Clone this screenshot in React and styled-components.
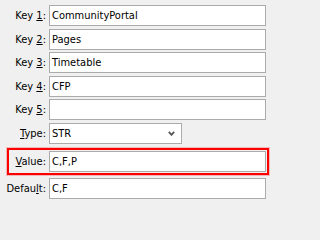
import React from "react";
import styled, { createGlobalStyle } from "styled-components";

const Global = createGlobalStyle`
  html, body { margin: 0; padding: 0; background: #f0f0f0; }
  body { font-family: "DejaVu Sans Condensed", "Liberation Sans", Arial, sans-serif; font-size: 11px; color: #000; }
`;

const Panel = styled.div`
  width: 271px;
  height: 202px;
  box-sizing: border-box;
  padding: 5px 5px 0 0;
  background: #f0f0f0;
  display: flex;
  flex-direction: column;
`;

const Row = styled.div`
  display: flex;
  align-items: center;
  height: 21px;
  margin-bottom: ${(p) => p.$gap ?? 2.5}px;
  flex-shrink: 0;
`;

const Label = styled.label`
  width: ${(p) => p.$width ?? 46}px;
  flex-shrink: 0;
  text-align: right;
  margin-right: 3px;
  white-space: nowrap;
  color: #000;
  u { text-decoration: underline; text-underline-offset: 1px; }
`;

const Input = styled.div`
  flex: 1;
  height: 21px;
  box-sizing: border-box;
  border: 1px solid #ababab;
  background: #fff;
  padding: 0 2px;
  display: flex;
  align-items: center;
  white-space: nowrap;
  overflow: hidden;
`;

const Select = styled.div`
  width: 133px;
  height: 21px;
  box-sizing: border-box;
  border: 1px solid #ababab;
  background: #fff;
  padding: 0 2px;
  display: flex;
  align-items: center;
  justify-content: space-between;
`;

const Chevron = styled.svg`
  width: 7px;
  height: 5px;
  margin-right: 4px;
  margin-top: 1px;
`;

const Frame = styled.div`
  display: flex;
  align-items: center;
  margin: 1.5px -3px 3px 7px;
  padding: 1px 1px 1px 0;
  border: 2px solid #ff0000;
  box-shadow: 0 0 0 1px rgba(255, 80, 80, 0.35);
  flex-shrink: 0;
`;

const keys = [
  { n: "1", v: "CommunityPortal" },
  { n: "2", v: "Pages" },
  { n: "3", v: "Timetable" },
  { n: "4", v: "CFP" },
  { n: "5", v: "" },
];

export default function App() {
  return (
    <>
      <Global />
      <Panel>
        {keys.map((k) => (
          <Row key={k.n}>
            <Label>
              Key <u>{k.n}</u>:
            </Label>
            <Input>{k.v}</Input>
          </Row>
        ))}
        <Row>
          <Label>
            <u>T</u>ype:
          </Label>
          <Select>
            <span>STR</span>
            <Chevron viewBox="0 0 7 5">
              <path d="M0.8 0.8 L3.5 3.8 L6.2 0.8" fill="none" stroke="#555" strokeWidth="1.8" />
            </Chevron>
          </Select>
        </Row>
        <Frame>
          <Label $width={37}>
            <u>V</u>alue:
          </Label>
          <Input>C,F,P</Input>
        </Frame>
        <Row>
          <Label>
            Defau<u>l</u>t:
          </Label>
          <Input>C,F</Input>
        </Row>
      </Panel>
    </>
  );
}
